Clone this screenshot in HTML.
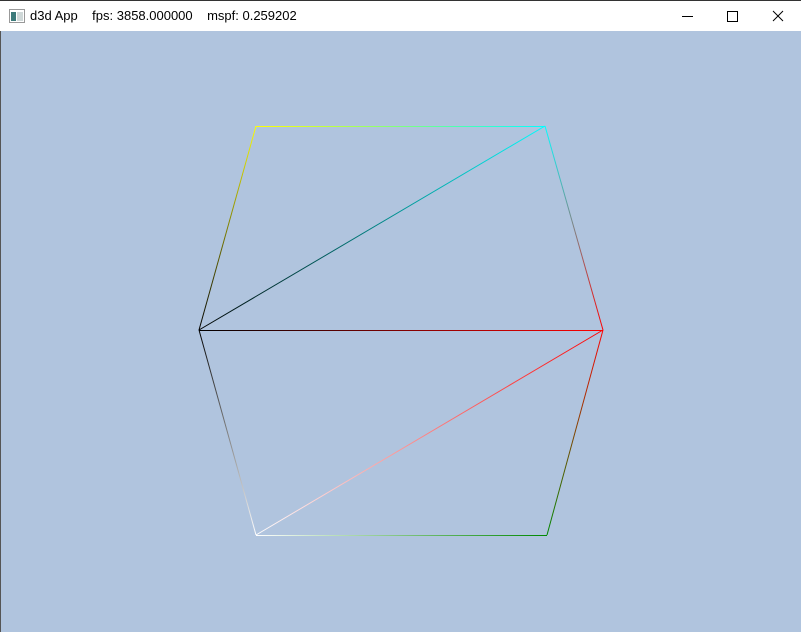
<!DOCTYPE html>
<html><head><style>
html,body{margin:0;padding:0;width:801px;height:632px;overflow:hidden;background:#b0c4de;font-family:"Liberation Sans","Noto Sans CJK SC",sans-serif}
#bar{position:absolute;left:0;top:0;width:801px;height:31px;background:#fff;border-top:1px solid #333;box-sizing:border-box}
#t{position:absolute;left:30px;top:7px;font-size:13px;color:#000;white-space:pre}
</style></head><body>
<div id="bar">
<svg style="position:absolute;left:9px;top:8px" width="16" height="14"><rect x="0.5" y="0.5" width="15" height="13" fill="#fff" stroke="#999"/><rect x="2" y="3" width="5" height="9" fill="#3c7a7a"/><rect x="8" y="3" width="6" height="9" fill="#cfd8d8"/></svg>
<div id="t">d3d App    fps: 3858.000000    mspf: 0.259202</div>
<svg style="position:absolute;left:680px;top:8px" width="110" height="16" fill="none" stroke="#000" stroke-width="1">
<line x1="2" y1="7.5" x2="13" y2="7.5"/>
<rect x="47.5" y="2.5" width="10" height="10"/>
<line x1="93" y1="2" x2="103" y2="12"/><line x1="103" y1="2" x2="93" y2="12"/>
</svg>
</div>
<div style="position:absolute;left:0;top:31px;width:1px;height:601px;background:#555"></div>
<svg style="position:absolute;left:0;top:0" width="801" height="632">
<defs>
<linearGradient id="g1" gradientUnits="userSpaceOnUse" x1="256" y1="126" x2="545" y2="126"><stop offset="0" stop-color="#ff0"/><stop offset="1" stop-color="#0ff"/></linearGradient>
<linearGradient id="g2" gradientUnits="userSpaceOnUse" x1="545" y1="126" x2="603" y2="330"><stop offset="0" stop-color="#0ff"/><stop offset="1" stop-color="#f00"/></linearGradient>
<linearGradient id="g3" gradientUnits="userSpaceOnUse" x1="199" y1="330" x2="256" y2="126"><stop offset="0" stop-color="#000"/><stop offset="1" stop-color="#ff0"/></linearGradient>
<linearGradient id="g4" gradientUnits="userSpaceOnUse" x1="199" y1="330" x2="545" y2="126"><stop offset="0" stop-color="#000"/><stop offset="1" stop-color="#0ff"/></linearGradient>
<linearGradient id="g5" gradientUnits="userSpaceOnUse" x1="199" y1="330" x2="603" y2="330"><stop offset="0" stop-color="#000"/><stop offset="1" stop-color="#f00"/></linearGradient>
<linearGradient id="g6" gradientUnits="userSpaceOnUse" x1="199" y1="330" x2="256" y2="535"><stop offset="0" stop-color="#000"/><stop offset="1" stop-color="#fff"/></linearGradient>
<linearGradient id="g7" gradientUnits="userSpaceOnUse" x1="256" y1="535" x2="603" y2="330"><stop offset="0" stop-color="#fff"/><stop offset="1" stop-color="#f00"/></linearGradient>
<linearGradient id="g8" gradientUnits="userSpaceOnUse" x1="256" y1="535" x2="547" y2="535"><stop offset="0" stop-color="#fff"/><stop offset="1" stop-color="#080"/></linearGradient>
<linearGradient id="g9" gradientUnits="userSpaceOnUse" x1="547" y1="535" x2="603" y2="330"><stop offset="0" stop-color="#080"/><stop offset="1" stop-color="#f00"/></linearGradient>
</defs>
<g stroke-width="1" fill="none">
<line x1="256" y1="126.5" x2="545" y2="126.5" stroke="url(#g1)"/>
<line x1="545" y1="126" x2="603" y2="330" stroke="url(#g2)"/>
<line x1="199" y1="330" x2="256" y2="126" stroke="url(#g3)"/>
<line x1="199" y1="330" x2="545" y2="126" stroke="url(#g4)"/>
<line x1="199" y1="330.5" x2="603" y2="330.5" stroke="url(#g5)"/>
<line x1="199" y1="330" x2="256" y2="535" stroke="url(#g6)"/>
<line x1="256" y1="535" x2="603" y2="330" stroke="url(#g7)"/>
<line x1="256" y1="535.5" x2="547" y2="535.5" stroke="url(#g8)"/>
<line x1="547" y1="535" x2="603" y2="330" stroke="url(#g9)"/>
</g>
</svg>
</body></html>
